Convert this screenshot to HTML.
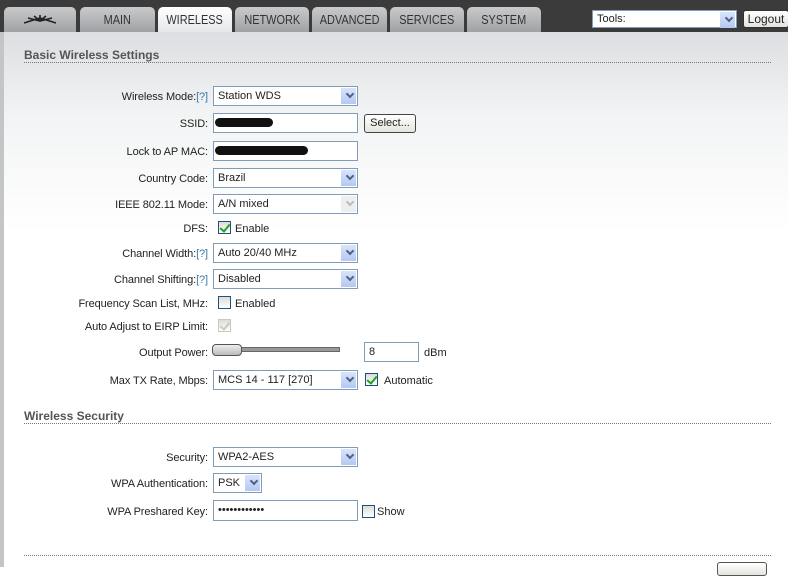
<!DOCTYPE html>
<html><head><meta charset="utf-8"><style>
*{margin:0;padding:0;box-sizing:border-box}
body{width:788px;height:567px;overflow:hidden;background:#fff;font-family:"Liberation Sans",sans-serif;font-size:11px;color:#222;position:relative}
.hdr{position:absolute;left:0;top:0;width:788px;height:32px;background:#3b3b3b}
.tab{position:absolute;top:7px;height:25px;background:linear-gradient(#c9cacc,#9fa1a4);border-radius:5px 5px 0 0;color:#333;font-size:13px;text-align:center;line-height:26px}
.tab span{display:inline-block;transform:scaleX(0.84)}
.tab.on{background:linear-gradient(#ffffff,#e6e7e9)}
.main{position:absolute;left:0;top:32px;width:788px;height:535px;background:linear-gradient(#dcdee1 0,#f2f3f4 80px,#fff 200px)}
.lstrip{position:absolute;left:0;top:32px;width:4px;height:535px;background:#c4c5c7}
h2{position:absolute;left:24px;font-size:12px;font-weight:bold;color:#555;transform:translateY(1px)}
.dot{position:absolute;left:24px;width:747px;border-top:1px dotted #777}
.l{position:absolute;right:580px;text-align:right;white-space:nowrap;color:#222;transform:translateY(1px);letter-spacing:-0.1px}
.q{color:#3a7aa8}
.in{position:absolute;left:213px;width:145px;height:20px;border:1px solid #7f9db9;background:#fff;padding-left:4px;line-height:19px}
.sel:after{content:"";position:absolute;right:1px;top:1px;width:15px;height:16px;background:linear-gradient(#d9e4fb,#b4c8f2)}
.sel i{position:absolute;right:4px;top:4px;width:6px;height:6px;border-right:2px solid #4d6185;border-bottom:2px solid #4d6185;transform:rotate(45deg);z-index:2}
.dis:after{background:#eeeeee}.dis i{border-color:#bbb}
.cb{position:absolute;left:218px;width:13px;height:13px;border:1px solid #1c5180;background:linear-gradient(#dcdcd7,#fff)}
.cb.k:before{content:"";position:absolute;left:3px;top:0px;width:4px;height:8px;border-right:2px solid #21a121;border-bottom:2px solid #21a121;transform:rotate(40deg)}
.cb.g{border-color:#c9c9c2}.cb.g:before{border-color:#c9c9c2}
.t{position:absolute;white-space:nowrap;transform:translateY(1px)}
.btn{position:absolute;border:1px solid #333;border-radius:3px;background:linear-gradient(#fff,#e4e4df);text-align:center}
.blob{position:absolute;height:9px;background:#111;border-radius:5px}
</style></head><body>
<div class="hdr"></div>
<div class="tab" style="left:4px;width:72px"><svg width="72" height="25"><path d="M20 16 L36 11 L52 16 M24 11 L36 14 L48 11 M36 8 L36 14 M30 9 L36 14 L42 9" stroke="#222" stroke-width="1.6" fill="none"/></svg></div>
<div class="tab" style="left:80px;width:75px"><span>MAIN</span></div>
<div class="tab on" style="left:158px;width:74px"><span>WIRELESS</span></div>
<div class="tab" style="left:235px;width:74px"><span>NETWORK</span></div>
<div class="tab" style="left:312px;width:75px"><span>ADVANCED</span></div>
<div class="tab" style="left:390px;width:74px"><span>SERVICES</span></div>
<div class="tab" style="left:467px;width:74px"><span>SYSTEM</span></div>
<div class="in sel" style="left:592px;top:10px;width:145px;height:18px;line-height:16px">Tools:<i></i></div>
<div class="btn" style="left:743px;top:10px;width:46px;height:18px;line-height:16px;font-size:12px">Logout</div>
<div class="main"></div><div class="lstrip"></div>
<h2 style="top:47px">Basic Wireless Settings</h2><div class="dot" style="top:62px"></div>

<div class="l" style="top:90px">Wireless Mode:<span class="q">[?]</span></div><div class="in sel" style="top:86px">Station WDS<i></i></div>
<div class="l" style="top:117px">SSID:</div><div class="in" style="top:113px"></div><div class="blob" style="left:215px;top:118px;width:58px"></div>
<div class="btn" style="left:364px;top:114px;width:52px;height:19px;line-height:17px;border-color:#444">Select...</div>
<div class="l" style="top:145px">Lock to AP MAC:</div><div class="in" style="top:141px"></div><div class="blob" style="left:215px;top:146px;width:93px"></div>
<div class="l" style="top:172px">Country Code:</div><div class="in sel" style="top:168px">Brazil<i></i></div>
<div class="l" style="top:198px">IEEE 802.11 Mode:</div><div class="in sel dis" style="top:194px">A/N mixed<i></i></div>
<div class="l" style="top:222px">DFS:</div><div class="cb k" style="top:221px"></div><div class="t" style="left:235px;top:222px">Enable</div>
<div class="l" style="top:247px">Channel Width:<span class="q">[?]</span></div><div class="in sel" style="top:243px">Auto 20/40 MHz<i></i></div>
<div class="l" style="top:273px">Channel Shifting:<span class="q">[?]</span></div><div class="in sel" style="top:269px">Disabled<i></i></div>
<div class="l" style="top:297px">Frequency Scan List, MHz:</div><div class="cb" style="top:296px"></div><div class="t" style="left:235px;top:297px">Enabled</div>
<div class="l" style="top:320px">Auto Adjust to EIRP Limit:</div><div class="cb k g" style="top:319px"></div>
<div class="l" style="top:346px">Output Power:</div>
<div style="position:absolute;left:240px;top:347px;width:100px;height:5px;background:#999;border:1px solid #666"></div>
<div style="position:absolute;left:212px;top:344px;width:30px;height:12px;border:1px solid #555;border-radius:4px;background:linear-gradient(#eee,#bbb)"></div>
<div class="in" style="left:364px;top:342px;width:55px">8</div><div class="t" style="left:424px;top:346px">dBm</div>
<div class="l" style="top:374px">Max TX Rate, Mbps:</div><div class="in sel" style="top:370px">MCS 14 - 117 [270]<i></i></div>
<div class="cb k" style="left:365px;top:373px"></div><div class="t" style="left:384px;top:374px">Automatic</div>

<h2 style="top:408px">Wireless Security</h2><div class="dot" style="top:423px"></div>
<div class="l" style="top:451px">Security:</div><div class="in sel" style="top:447px">WPA2-AES<i></i></div>
<div class="l" style="top:477px">WPA Authentication:</div><div class="in sel" style="top:473px;width:49px">PSK<i></i></div>
<div class="l" style="top:505px">WPA Preshared Key:</div><div class="in" style="top:500px;height:21px">••••••••••••</div>
<div class="cb" style="left:362px;top:505px"></div><div class="t" style="left:377px;top:505px">Show</div>
<div class="dot" style="top:555px"></div>
<div class="btn" style="left:717px;top:562px;width:50px;height:14px;border-color:#555"></div>
</body></html>
